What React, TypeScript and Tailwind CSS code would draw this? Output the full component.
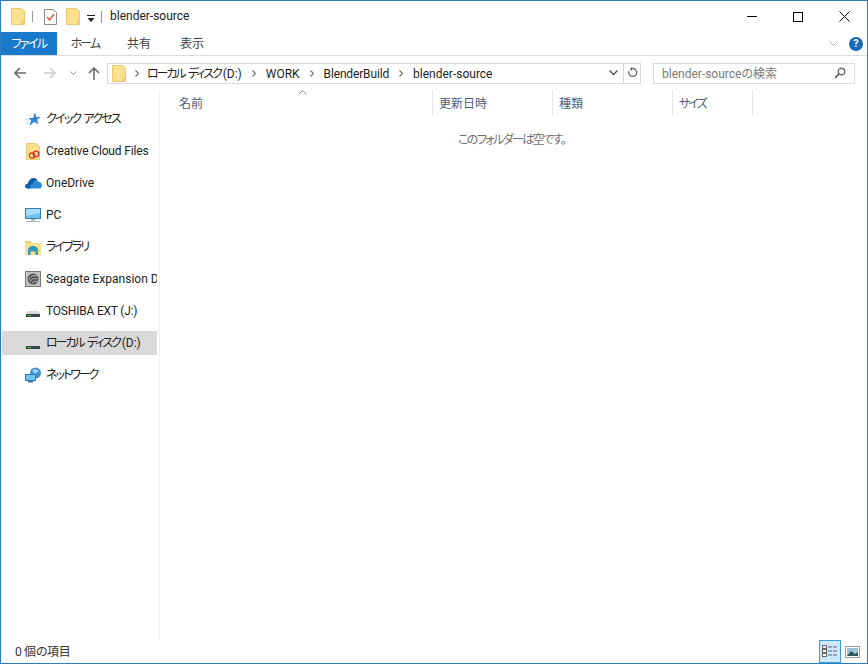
import React from "react";

const Folder = ({ className = "" }: { className?: string }) => (
  <svg width="14" height="17" viewBox="0 0 14 17" className={className}>
    <path d="M0.5 0.5H10.5L13.5 3V16.5H0.5Z" fill="#fbe08f" stroke="#e8c873" />
    <rect x="10" y="12" width="3" height="4" fill="#f3cf76" />
  </svg>
);

const Drive = () => (
  <svg width="16" height="16" viewBox="0 0 16 16">
    <path d="M2.5 8H13.5L15 11H1Z" fill="#d6dadd" />
    <rect x="1" y="11" width="14" height="3" fill="#3d4449" />
    <rect x="3" y="12" width="3" height="1" fill="#5cc24c" />
  </svg>
);

const Crumb = ({ className = "w-[24px]" }: { className?: string }) => (
  <div className={`${className} flex justify-center shrink-0`}>
    <svg width="4" height="7" viewBox="0 0 4 7">
      <path d="M0.5 0.5L3.5 3.5L0.5 6.5" stroke="#6d6d6d" strokeWidth="1.1" fill="none" />
    </svg>
  </div>
);

const LocalDisk = ({ className = "" }: { className?: string }) => (
  <span className={`flex items-center ${className}`}>
    <span className="tracking-[-2.1px] [word-spacing:2.5px] mr-[2px]">ローカル ディスク</span>
    <span>(D:)</span>
  </span>
);

const items: { label: React.ReactNode; icon: React.ReactNode; selected?: boolean; track?: string }[] = [
  {
    label: "クイック アクセス",
    track: "tracking-[-1.8px] [word-spacing:2px]",
    icon: (
      <svg width="16" height="15" viewBox="0 0 16 15">
        <path d="M10 0.5L11.4 5H15.5L12.2 7.8L13.4 12.5L9.2 9.7L4.5 14L6 8.5L3.5 6H8Z" fill="#2f86d0" />
        <path d="M3 7.5H0.5M3.5 10H1M3.5 12H2" stroke="#a8d0ee" />
      </svg>
    ),
  },
  {
    label: "Creative Cloud Files",
    track: "tracking-[-0.15px]",
    icon: (
      <svg width="14" height="17" viewBox="0 0 14 17">
        <path d="M0.5 0.5H10L13.5 3.5V16.5H0.5Z" fill="#fbe08f" stroke="#e8c873" />
        <circle cx="6" cy="12.5" r="2.6" fill="none" stroke="#d8311f" strokeWidth="1.3" />
        <circle cx="10" cy="11" r="2.8" fill="none" stroke="#d8311f" strokeWidth="1.3" />
      </svg>
    ),
  },
  {
    label: "OneDrive",
    icon: (
      <svg width="17" height="12" viewBox="0 0 17 12">
        <path d="M3 11.5C0.5 11.5 0 9.8 0.3 8.6C0.7 7.2 2 6.7 3 6.8C3.6 3.5 6 1 8.5 1C10.8 1 12.3 2.4 13 4.5C15.5 4.7 17 6.5 17 8.5C17 10.3 15.8 11.5 14 11.5Z" fill="#2a8ad8" />
        <path d="M3 11.5C0.5 11.5 0 9.8 0.3 8.6C0.7 7.2 2 6.7 3 6.8C3.6 3.5 6 1 8.5 1C10 1 11.5 2 12 3C9.5 3.5 8 5 7.5 7C6 7 4.5 8.5 5 11.5Z" fill="#0f5aa6" />
      </svg>
    ),
  },
  {
    label: "PC",
    icon: (
      <svg width="16" height="16" viewBox="0 0 16 16">
        <rect x="0.5" y="1.5" width="15" height="10" fill="#6cc3ee" stroke="#3d7da5" />
        <path d="M1 2H15V6L1 9Z" fill="#a5defa" />
        <rect x="6" y="12" width="4" height="1.5" fill="#9aa7b0" />
        <rect x="1" y="14" width="14" height="1" fill="#aab4bb" />
      </svg>
    ),
  },
  {
    label: "ライブラリ",
    track: "tracking-[-1.9px]",
    icon: (
      <svg width="16" height="15" viewBox="0 0 16 15">
        <path d="M0 1H6L7 3H16V15H0Z" fill="#fbe08f" />
        <rect x="0" y="1" width="6" height="1.5" fill="#e8c873" />
        <path d="M3 15V10C3 7.5 5.5 6 8 6C10.5 6 13 7.5 13 10V15H10.5V11.5H5.5V15Z" fill="#2f9bb8" />
      </svg>
    ),
  },
  {
    label: "Seagate Expansion Drive",
    icon: (
      <svg width="16" height="16" viewBox="0 0 16 16">
        <rect x="0.5" y="0.5" width="15" height="15" fill="#c2c2c2" stroke="#777" />
        <circle cx="8" cy="8" r="5.5" fill="#555" />
        <path d="M4 9C5 5 8 4 12 5M5 11C6 8 9 7 12 8M7 12.5C8 10.5 10 10 12.5 10.5" stroke="#b5b5b5" fill="none" />
      </svg>
    ),
  },
  { label: "TOSHIBA EXT (J:)", track: "tracking-[-0.2px]", icon: <Drive /> },
  { label: <LocalDisk />, icon: <Drive />, selected: true },
  {
    label: "ネットワーク",
    track: "tracking-[-2px]",
    icon: (
      <svg width="17" height="16" viewBox="0 0 17 16">
        <circle cx="10.5" cy="6" r="5.5" fill="#3e8fd0" />
        <path d="M7 3C9 1.5 12 2 14 4L10 7Z" fill="#9ed3f2" />
        <rect x="0.5" y="7.5" width="10" height="6" fill="#6cc3ee" stroke="#2d78b5" />
        <rect x="3" y="14" width="5" height="1.5" fill="#2d78b5" />
      </svg>
    ),
  },
];

export default function App() {
  return (
    <div className="w-[868px] h-[664px] flex flex-col border border-[#2b7dbf] bg-white text-[12px] text-[#1e1e1e] font-['Roboto','Noto_Sans_CJK_JP',sans-serif] [font-feature-settings:'palt'] overflow-hidden">
      {/* title bar */}
      <div className="h-[31px] shrink-0 flex items-center pl-[10px]">
        <Folder />
        <div className="w-px h-[11px] bg-[#9a9a9a] ml-[7px] mr-[11px]" />
        <svg width="13" height="16" viewBox="0 0 13 16">
          <path d="M0.5 0.5H9L12.5 3.5V15.5H0.5Z" fill="#fff" stroke="#8a8a8a" />
          <path d="M3 8L5.5 11L10 5" stroke="#e0532b" strokeWidth="1.3" fill="none" />
        </svg>
        <Folder className="ml-[9px]" />
        <svg width="8" height="8" viewBox="0 0 8 8" className="ml-[7px] mt-[4px]">
          <rect x="0" y="0" width="8" height="1" fill="#222" />
          <path d="M0.5 3H7.5L4 7Z" fill="#222" />
        </svg>
        <div className="w-px h-[12px] bg-[#9a9a9a] ml-[6px] mr-[8px]" />
        <span className="text-[#222] pb-px">blender-source</span>
        <div className="ml-auto flex items-center">
          <div className="w-[46px] flex justify-center">
            <div className="w-[10px] h-px bg-black" />
          </div>
          <div className="w-[46px] flex justify-center">
            <div className="w-[10px] h-[10px] border border-black" />
          </div>
          <div className="w-[46px] flex justify-center">
            <svg width="11" height="11" viewBox="0 0 11 11">
              <path d="M0.5 0.5L10.5 10.5M10.5 0.5L0.5 10.5" stroke="#000" fill="none" />
            </svg>
          </div>
        </div>
      </div>

      {/* ribbon tabs */}
      <div className="h-[24px] shrink-0 flex items-stretch border-b border-[#dadbdc]">
        <div className="w-[56px] h-[23px] bg-[#1979ca] text-white flex items-center justify-center tracking-[-1.6px]">ファイル</div>
        <div className="w-[56px] flex items-center justify-center text-[#444] tracking-[-2px]">ホーム</div>
        <div className="w-[52px] flex items-center justify-center text-[#444]">共有</div>
        <div className="w-[54px] flex items-center justify-center text-[#444]">表示</div>
        <div className="ml-auto flex items-center pr-[4px] gap-[11px]">
          <svg width="9" height="6" viewBox="0 0 9 6">
            <path d="M0.5 0.5L4.5 4.5L8.5 0.5" stroke="#a9a9a9" fill="none" />
          </svg>
          <div className="w-[14px] h-[14px] rounded-full bg-[#1668b8] text-white text-[11px] font-bold flex items-center justify-center leading-none">
            ?
          </div>
        </div>
      </div>

      {/* address row */}
      <div className="h-[34px] shrink-0 flex items-center pl-[13px]">
        <svg width="12" height="12" viewBox="0 0 12 12">
          <path d="M6 1L1 6L6 11M1 6H12" stroke="#6d6d6d" strokeWidth="1.6" fill="none" />
        </svg>
        <svg width="12" height="12" viewBox="0 0 12 12" className="ml-[18px]">
          <path d="M6 1L11 6L6 11M11 6H0" stroke="#d0d0d0" strokeWidth="1.6" fill="none" />
        </svg>
        <svg width="7" height="5" viewBox="0 0 7 5" className="ml-[14px]">
          <path d="M0.5 0.5L3.5 3.5L6.5 0.5" stroke="#8a8a8a" fill="none" />
        </svg>
        <svg width="12" height="13" viewBox="0 0 12 13" className="ml-[11px]">
          <path d="M6 13V1M1 6L6 1L11 6" stroke="#6d6d6d" strokeWidth="1.6" fill="none" />
        </svg>
        <div className="ml-[7px] w-[534px] h-[21px] flex items-center border border-[#d9d9d9] pl-[4px]">
          <Folder />
          <Crumb className="w-[21px]" />
          <LocalDisk className="pt-px" />
          <Crumb />
          <span className="pt-px">WORK</span>
          <Crumb />
          <span className="pt-px tracking-[-0.15px]">BlenderBuild</span>
          <Crumb />
          <span className="pt-px">blender-source</span>
          <div className="ml-auto flex items-center h-full">
            <svg width="9" height="6" viewBox="0 0 9 6" className="mr-[5px]">
              <path d="M0.5 0.5L4.5 4.5L8.5 0.5" stroke="#555" strokeWidth="1.4" fill="none" />
            </svg>
            <div className="w-[17px] h-full border-l border-[#d9d9d9] flex items-center justify-center">
              <svg width="11" height="12" viewBox="0 0 11 12">
                <path d="M5 1.5H6.5A4 4 0 1 1 2 4" stroke="#6d6d6d" strokeWidth="1.3" fill="none" />
                <path d="M5 0V4L2.5 2Z" fill="#6d6d6d" />
              </svg>
            </div>
          </div>
        </div>
        <div className="ml-[12px] w-[202px] h-[21px] flex items-center justify-between border border-[#d9d9d9] pl-[8px] pr-[8px] text-[#7a7a7a]">
          <span className="pt-px">blender-sourceの検索</span>
          <svg width="12" height="12" viewBox="0 0 12 12">
            <circle cx="7.5" cy="4.5" r="3.3" stroke="#6d6d6d" strokeWidth="1.4" fill="none" />
            <path d="M5 7L1 11" stroke="#6d6d6d" strokeWidth="1.8" />
          </svg>
        </div>
      </div>

      {/* body */}
      <div className="flex-1 min-h-0 flex">
        <div className="w-[158px] shrink-0 pt-[17px] flex flex-col gap-[8px] pl-px">
          {items.map((it, i) => (
            <div
              key={i}
              className={`h-[24px] w-[155px] flex items-center overflow-hidden whitespace-nowrap ${it.selected ? "bg-[#d9d9d9]" : ""}`}
            >
              <div className="w-[44px] shrink-0 flex justify-end pr-[4px]">
                <div className="w-[18px] flex justify-center">{it.icon}</div>
              </div>
              <span className={`text-[#222] ${it.track ?? ""}`}>{it.label}</span>
            </div>
          ))}
        </div>
        <div className="flex-1 border-l border-[#f0f0f0] flex flex-col relative">
          <svg width="9" height="5" viewBox="0 0 9 5" className="absolute left-[138px] top-0">
            <path d="M0.5 4.5L4.5 0.5L8.5 4.5" stroke="#8a8a8a" fill="none" />
          </svg>
          <div className="h-[26px] flex text-[#4c607a]">
            <div className="w-[273px] pl-[19px] pt-px flex items-center border-r border-[#e5e5e5]">名前</div>
            <div className="w-[120px] pl-[6px] pt-px flex items-center border-r border-[#e5e5e5]">更新日時</div>
            <div className="w-[120px] pl-[6px] pt-px flex items-center border-r border-[#e5e5e5]">種類</div>
            <div className="w-[80px] pl-[6px] pt-px flex items-center border-r border-[#e5e5e5] tracking-[-2px]">サイズ</div>
          </div>
          <div className="flex justify-center pt-[15px] pr-[4px] text-[#6d6d6d] tracking-[-1.6px]">このフォルダーは空です。</div>
        </div>
      </div>

      {/* status bar */}
      <div className="h-[23px] shrink-0 flex items-center pl-[14px] text-[#333]">
        <span className="tracking-[-0.3px]">0 個の項目</span>
        <div className="ml-auto flex items-center h-full pr-[7px] gap-[4px]">
          <div className="w-[22px] h-full bg-[#cce8ff] border border-[#3f9bd6] flex items-center justify-center">
            <svg width="16" height="13" viewBox="0 0 16 13">
              <rect x="0.5" y="0.5" width="4" height="3" fill="#fff" stroke="#666" />
              <rect x="0.5" y="4.5" width="4" height="3" fill="#fff" stroke="#666" />
              <rect x="0.5" y="8.5" width="4" height="3" fill="#fff" stroke="#666" />
              <path d="M6 2H10M11 2H15M6 6H10M11 6H15M6 10H10M11 10H15" stroke="#666" />
            </svg>
          </div>
          <svg width="15" height="12" viewBox="0 0 15 12">
            <rect x="0.5" y="0.5" width="14" height="11" fill="#fff" stroke="#9a9a9a" />
            <rect x="2" y="2" width="11" height="8" fill="#9cc4d8" />
            <path d="M2 10L6 5L10 8L13 6V10Z" fill="#2f5560" />
          </svg>
        </div>
      </div>
    </div>
  );
}
